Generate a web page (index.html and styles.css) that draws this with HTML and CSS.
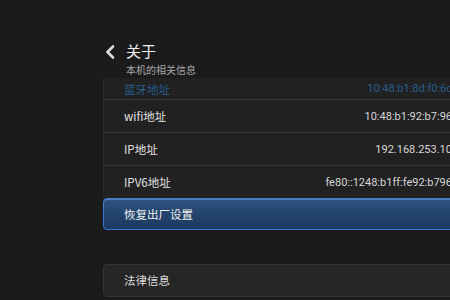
FILE: index.html
```
<!DOCTYPE html>
<html>
<head>
<meta charset="utf-8">
<link rel="stylesheet" href="styles.css">
</head>
<body>
<div class="screen">
  <div class="header">
    <svg class="back" width="12" height="14" viewBox="0 0 12 14"><polyline points="9,1.5 3.5,7 9,12.5" fill="none" stroke="#dcdcdc" stroke-width="2.6" stroke-linecap="round" stroke-linejoin="round"/></svg>
    <div class="titles">
      <div class="title">关于</div>
      <div class="subtitle">本机的相关信息</div>
    </div>
  </div>
  <div class="list">
    <div class="row first"><span class="label">蓝牙地址</span><span class="value">10:48:b1:8d:f0:6c</span></div>
    <div class="row"><span class="label">wifi地址</span><span class="value">10:48:b1:92:b7:96</span></div>
    <div class="row"><span class="label">IP地址</span><span class="value">192.168.253.10</span></div>
    <div class="row last"><span class="label">IPV6地址</span><span class="value">fe80::1248:b1ff:fe92:b796</span></div>
  </div>
  <div class="button active"><span class="btn-label">恢复出厂设置</span></div>
  <div class="button legal"><span class="btn-label">法律信息</span></div>
</div>
</body>
</html>
```
FILE: styles.css
```
html, body {
  margin: 0;
  padding: 0;
  background: #1b1b1c;
}
.screen {
  width: 450px;
  height: 300px;
  overflow: hidden;
  padding-left: 103px;
  box-sizing: border-box;
  font-family: "Noto Sans CJK SC", "Roboto", sans-serif;
  color: #e2e2e2;
  background: #1b1b1c;
}
.header {
  display: flex;
  align-items: flex-start;
  padding-top: 41px;
  height: 37px;
}
.back {
  margin-top: 4px;
  margin-left: 1px;
  width: 12px;
  height: 14px;
}
.titles {
  margin-left: 10px;
}
.title {
  font-size: 15px;
  line-height: 20px;
  color: #f0f0f0;
}
.subtitle {
  font-size: 10px;
  line-height: 12px;
  margin-top: 3px;
  color: #a8a8a8;
}
.list {
  width: 362px;
  background: #212122;
  border-left: 1px solid #2a2a2b;
}
.row {
  display: flex;
  justify-content: space-between;
  align-items: center;
  height: 33px;
  padding: 0 14px 0 20px;
  border-bottom: 1px solid #353536;
  box-sizing: border-box;
}
.row.first {
  height: 22px;
}
.row.first .label,
.row.first .value {
  color: #285d8a;
}
.row.last {
  border-bottom: none;
  height: 32px;
}
.label {
  font-size: 11.5px;
  color: #e0e0e0;
}
.value {
  font-family: "Roboto", sans-serif;
  font-size: 11px;
  color: #d6d6d6;
  white-space: nowrap;
}
.button {
  display: block;
  width: 362px;
  height: 32px;
  box-sizing: border-box;
  border-radius: 4px;
}
.btn-label {
  display: block;
  margin-left: 20px;
  font-size: 11.5px;
  line-height: 30px;
}
.button.active {
  background: linear-gradient(#2f5582, #23446c 50%, #1b3a61);
  border: 1px solid #3f78d6;
  box-shadow: inset 0 1px 0 #4f7fb3;
}
.button.active .btn-label {
  color: #f2f2f2;
}
.button.legal {
  margin-top: 34px;
  height: 33px;
  background: #262627;
  border: 1px solid #353536;
}
.button.legal .btn-label {
  color: #dcdcdc;
}
```
